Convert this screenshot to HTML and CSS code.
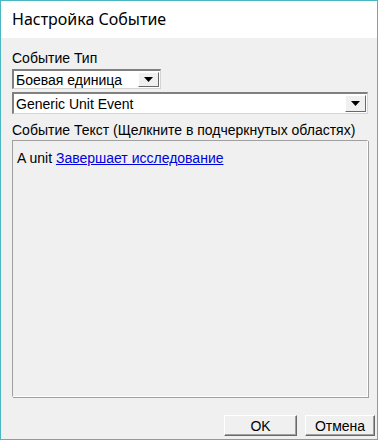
FILE: index.html
```html
<!DOCTYPE html>
<html lang="ru">
<head>
<meta charset="utf-8">
<title>Настройка Событие</title>
<link rel="stylesheet" href="styles.css">
</head>
<body>
<div class="window">
  <div class="titlebar">Настройка Событие</div>
  <div class="client">
    <div class="label">Событие Тип</div>
    <div class="combo combo-small">
      <span class="combo-text">Боевая единица</span>
      <span class="combo-btn"><svg width="9" height="5" viewBox="0 0 9 5"><path d="M0 0H9L4.5 5Z" fill="#000"/></svg></span>
    </div>
    <div class="combo combo-wide">
      <span class="combo-text">Generic Unit Event</span>
      <span class="combo-btn"><svg width="9" height="5" viewBox="0 0 9 5"><path d="M0 0H9L4.5 5Z" fill="#000"/></svg></span>
    </div>
    <div class="label label2">Событие Текст (Щелкните в подчеркнутых областях)</div>
    <div class="textbox">A unit <a class="link" href="#">Завершает исследование</a></div>
    <div class="buttons">
      <button class="btn btn-ok">OK</button>
      <button class="btn btn-cancel">Отмена</button>
    </div>
  </div>
</div>
</body>
</html>
```
FILE: styles.css
```css
html, body {
  margin: 0;
  padding: 0;
  background: #ffffff;
}
body {
  font-family: "Liberation Sans", Arial, sans-serif;
  font-size: 14px;
  color: #000;
}
.window {
  width: 376px;
  height: 438px;
  border: 1px solid #4cb6c2;
  display: flex;
  flex-direction: column;
  overflow: hidden;
}
.titlebar {
  height: 37px;
  flex: none;
  background: #ffffff;
  font-family: "Noto Sans", "Open Sans", sans-serif;
  font-size: 16px;
  line-height: 37px;
  padding-left: 11px;
}
.client {
  flex: 1;
  background: #f0f0f0;
  padding: 12px 10px 0 11px;
  display: flex;
  flex-direction: column;
}
.label {
  height: 16px;
  line-height: 16px;
  flex: none;
}
.combo {
  box-sizing: border-box;
  flex: none;
  background: #fff;
  border-top: 2px solid #808080;
  border-left: 2px solid #808080;
  border-right: 1px solid #d4d4d4;
  border-bottom: 1px solid #d4d4d4;
  display: flex;
  align-items: stretch;
}
.combo-small {
  margin-top: 3px;
  width: 149px;
  height: 20px;
}
.combo-wide {
  margin-top: 3px;
  width: 356px;
  height: 22px;
}
.combo-text {
  flex: 1;
  padding-left: 2px;
  display: flex;
  align-items: center;
}
.combo-btn {
  width: 21px;
  margin: 1px;
  box-sizing: border-box;
  background: #f0f0f0;
  border-top: 1px solid #ffffff;
  border-left: 1px solid #ffffff;
  border-right: 1px solid #696969;
  border-bottom: 1px solid #696969;
  display: flex;
  align-items: center;
  justify-content: center;
}
.label2 {
  margin-top: 8px;
}
.textbox {
  box-sizing: border-box;
  flex: none;
  margin-top: 2px;
  width: 356px;
  height: 257px;
  border: 1px solid #a0a0a0;
  border-right-color: #ffffff;
  border-bottom-color: #ffffff;
  box-shadow: 1px 1px 0 #a0a0a0;
  padding: 9px 4px;
  line-height: 16px;
}
.link {
  color: #0000e0;
  text-decoration: underline;
}
.buttons {
  display: flex;
  flex: none;
  justify-content: flex-end;
  gap: 8px;
  margin-top: 18px;
  margin-right: -8px;
}
.btn {
  box-sizing: border-box;
  height: 21px;
  background: #f0f0f0;
  border-top: 1px solid #ffffff;
  border-left: 1px solid #ffffff;
  border-right: 1px solid #696969;
  border-bottom: 1px solid #696969;
  box-shadow: inset -1px -1px 0 #a0a0a0;
  font-family: "Liberation Sans", Arial, sans-serif;
  font-size: 14px;
  color: #000;
  padding: 0;
}
.btn-ok {
  width: 73px;
}
.btn-cancel {
  width: 70px;
}
```
